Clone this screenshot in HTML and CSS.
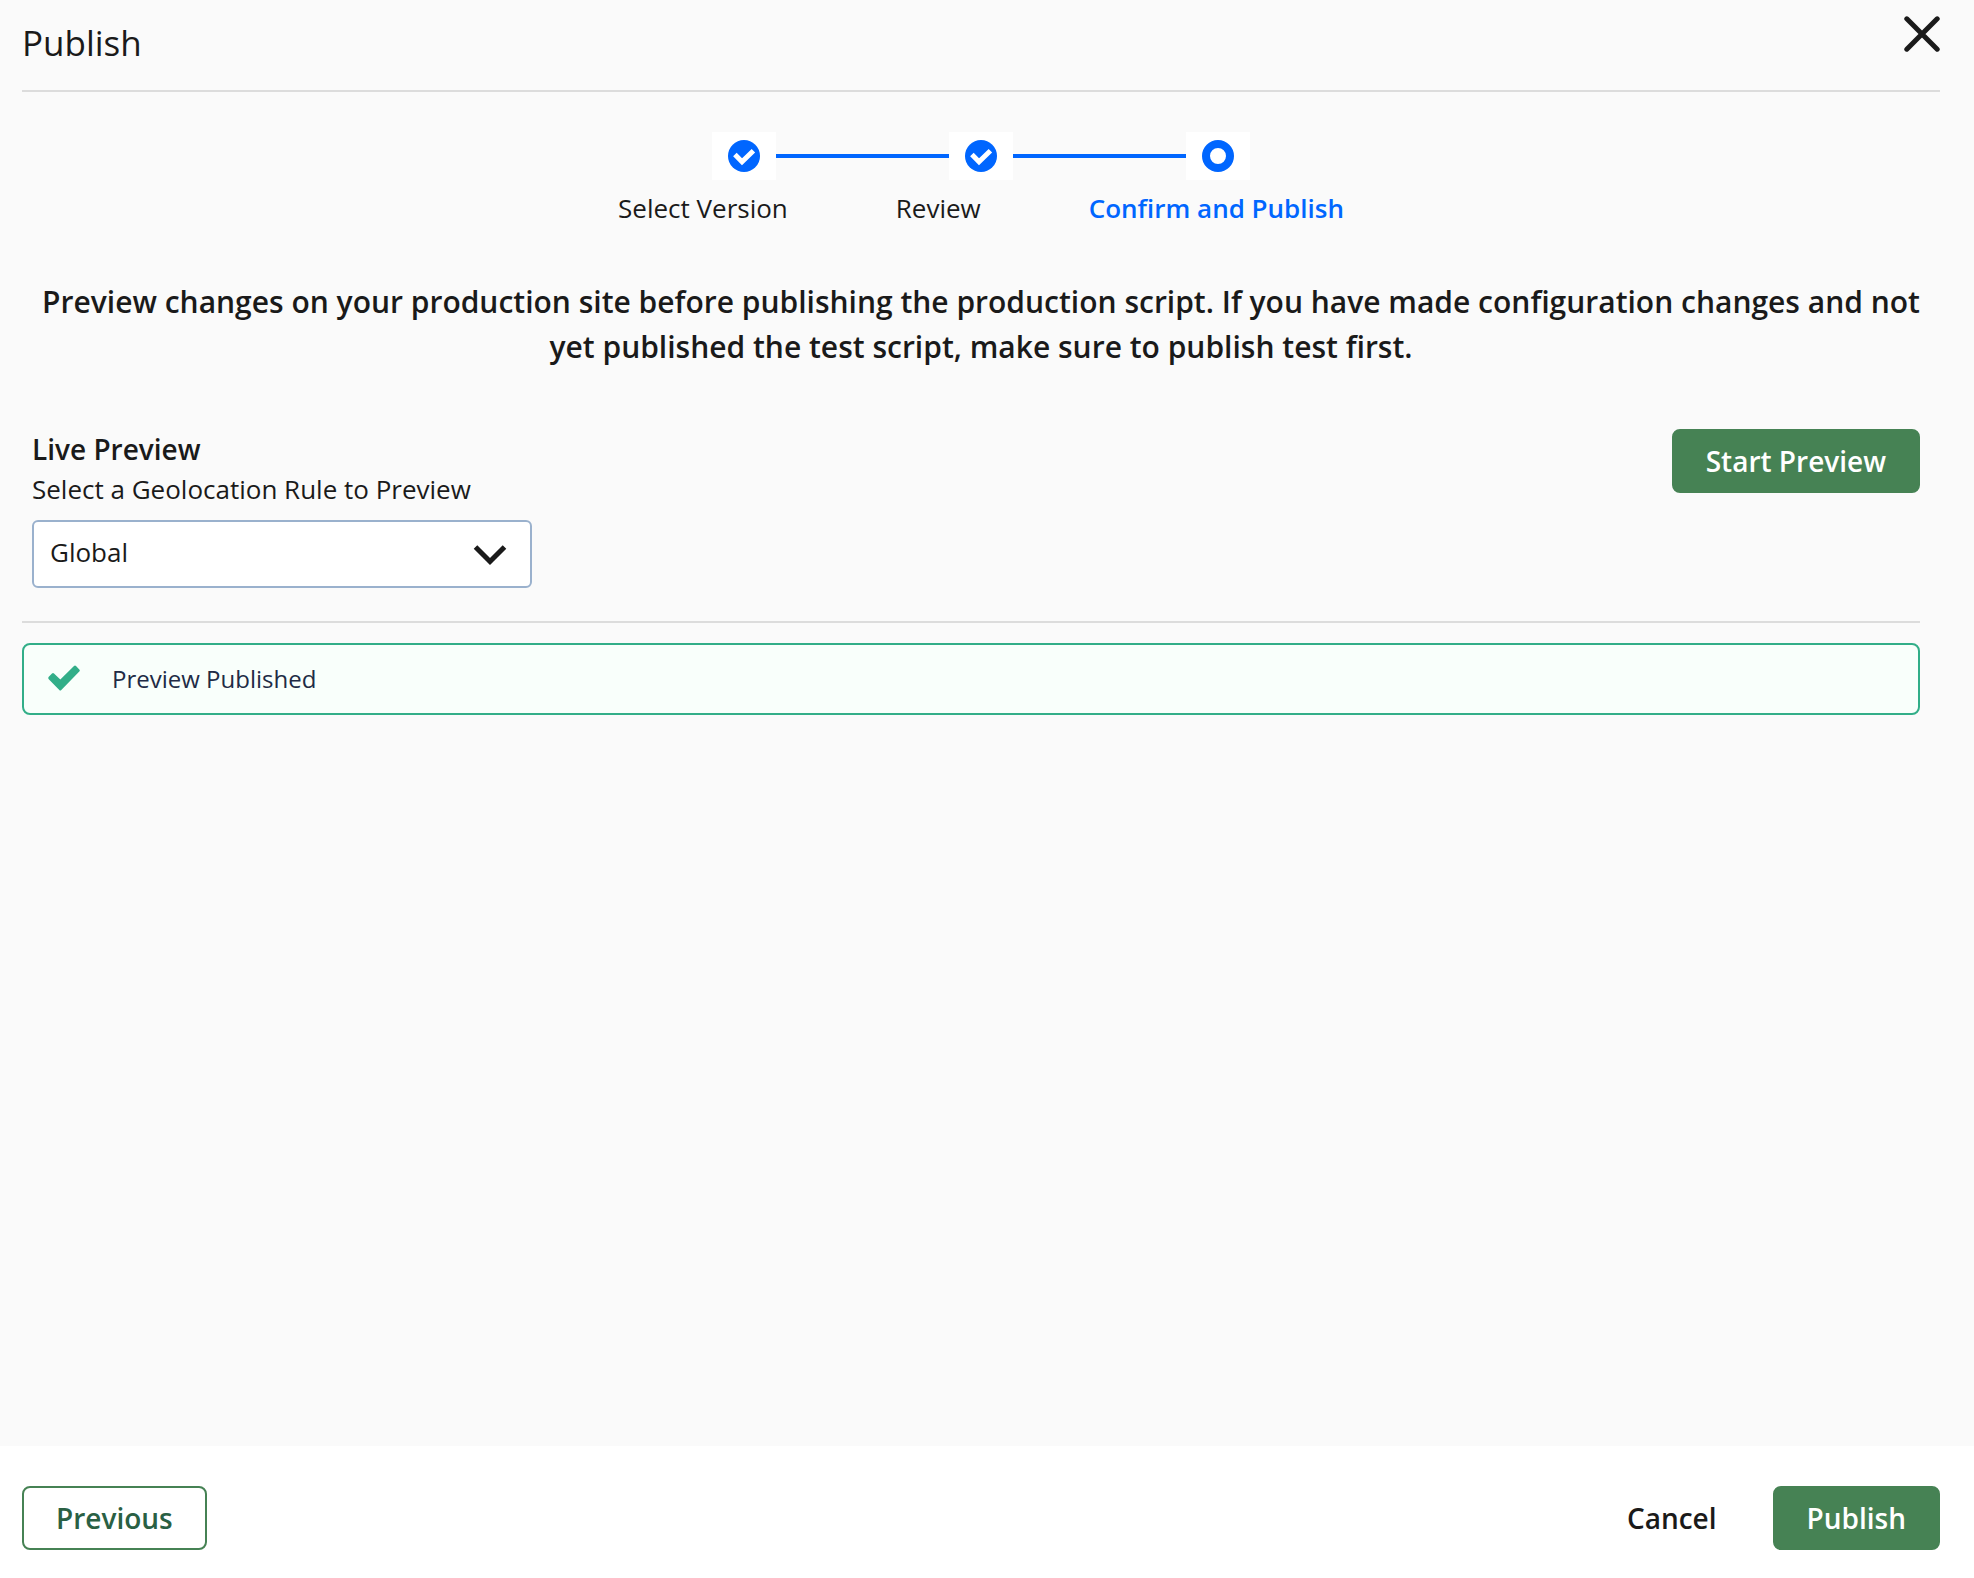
FILE: index.html
```html
<!DOCTYPE html>
<html lang="en">
<head>
  <meta charset="UTF-8" />
  <meta name="viewport" content="width=device-width, initial-scale=1" />
  <title>Publish</title>
  <link rel="stylesheet" href="styles.css">
</head>
<body>
  <main class="modal-body">
    <header class="modal-header">
      <h1>Publish</h1>
      <button type="button" class="close" aria-label="Close">
        <svg width="36" height="36" viewBox="0 0 36 36" fill="none" stroke="currentColor" stroke-width="5" stroke-linecap="round">
          <path d="M2.8 2.8L33.2 33.2M33.2 2.8L2.8 33.2" />
        </svg>
      </button>
    </header>

    <div class="content">
      <section class="stepper">
        <div class="step-icons">
          <span class="step-icon">
            <svg width="32" height="32" viewBox="0 0 32 32">
              <circle cx="16" cy="16" r="16" fill="#0066ff" />
              <path d="M6.9 14.6L14 21.7L25.4 10.7" fill="none" stroke="#fff" stroke-width="5" />
            </svg>
          </span>
          <span class="step-line"></span>
          <span class="step-icon">
            <svg width="32" height="32" viewBox="0 0 32 32">
              <circle cx="16" cy="16" r="16" fill="#0066ff" />
              <path d="M6.9 14.6L14 21.7L25.4 10.7" fill="none" stroke="#fff" stroke-width="5" />
            </svg>
          </span>
          <span class="step-line"></span>
          <span class="step-icon">
            <svg width="32" height="32" viewBox="0 0 32 32">
              <circle cx="16" cy="16" r="12" fill="#fff" stroke="#0066ff" stroke-width="8" />
            </svg>
          </span>
        </div>
        <ol class="step-labels">
          <li>Select Version</li>
          <li>Review</li>
          <li class="active">Confirm and Publish</li>
        </ol>
      </section>

      <p class="intro">Preview changes on your production site before publishing the production script. If you have made configuration changes and not yet published the test script, make sure to publish test first.</p>

      <section class="preview">
        <div class="preview-form">
          <h2>Live Preview</h2>
          <label for="rule">Select a Geolocation Rule to Preview</label>
          <div class="select-wrap">
            <select id="rule">
              <option>Global</option>
            </select>
            <svg class="chevron" width="34" height="22" viewBox="0 0 34 22" fill="none" stroke="currentColor" stroke-width="5">
              <path d="M2.5 3L17 17.5L31.5 3" />
            </svg>
          </div>
        </div>
        <button type="button" class="btn btn-primary">Start Preview</button>
      </section>

      <div class="alert" role="status">
        <svg width="32" height="26" viewBox="0 0 32 26" fill="#32ae88">
          <path d="M1 11.5L4 8.5Q5 7.5 6 8.5L12.3 14.5L26 1Q27 0 28 1L31.3 4.5Q32.3 5.5 31.3 6.5L13.3 25Q12.3 26 11.3 25L1 14.5Q-0.5 13 1 11.5Z" />
        </svg>
        <span>Preview Published</span>
      </div>
    </div>
  </main>

  <footer class="modal-footer">
    <button type="button" class="btn btn-outline">Previous</button>
    <div class="actions">
      <button type="button" class="btn btn-text">Cancel</button>
      <button type="button" class="btn btn-primary">Publish</button>
    </div>
  </footer>
</body>
</html>
```

FILE: styles.css
```css
* {
  box-sizing: border-box;
}
body {
  margin: 0;
  min-height: 100vh;
  display: flex;
  flex-direction: column;
  font-family: "Open Sans", "Noto Sans", sans-serif;
  font-size: 26px;
  color: #1a1a1a;
  background-color: #fff;
}
h1, h2, p, ol {
  margin: 0;
  padding: 0;
}
button, select {
  font: inherit;
  color: inherit;
}

.modal-body {
  flex: 1;
  padding: 0 34px 0 22px;
  background-color: #fafafa;
}
.modal-header {
  display: flex;
  justify-content: space-between;
  align-items: flex-start;
  height: 92px;
  border-bottom: 2px solid #dcdcdc;
}
h1 {
  padding-top: 19px;
  font-size: 35px;
  line-height: 48px;
  font-weight: 400;
}
.close {
  display: flex;
  margin-top: 16px;
  padding: 0;
  border: none;
  background: none;
  cursor: pointer;
}

/* stepper */
.stepper {
  padding-top: 40px;
}
.step-icons {
  display: flex;
  justify-content: center;
  align-items: center;
}
.step-icon {
  display: flex;
  justify-content: center;
  align-items: center;
  width: 64px;
  height: 48px;
  background-color: #fff;
}
.step-line {
  width: 173px;
  height: 4px;
  background-color: #0066ff;
}
.step-labels {
  display: flex;
  justify-content: center;
  gap: 108px;
  margin-top: 10px;
  line-height: 36px;
  list-style: none;
}
.step-labels .active {
  color: #0066ff;
  font-weight: 600;
}

.intro {
  margin-top: 53px;
  padding: 0 16px;
  font-size: 30px;
  line-height: 45px;
  font-weight: 600;
  text-align: center;
}

/* live preview */
.preview {
  display: flex;
  justify-content: space-between;
  align-items: flex-start;
  margin: 60px 20px 0 0;
  padding: 0 0 33px 10px;
  border-bottom: 2px solid #dcdcdc;
}
.preview-form {
  width: 500px;
}
h2 {
  font-size: 28px;
  line-height: 40px;
  font-weight: 600;
}
label {
  display: block;
  line-height: 40px;
}
.select-wrap {
  position: relative;
  margin-top: 11px;
}
select {
  display: block;
  width: 100%;
  height: 68px;
  padding: 0 60px 4px 16px;
  border: 2px solid #9ab1cd;
  border-radius: 6px;
  background-color: #fff;
  appearance: none;
}
.chevron {
  position: absolute;
  top: 24px;
  right: 25px;
  pointer-events: none;
}

.alert {
  display: flex;
  align-items: center;
  gap: 32px;
  height: 72px;
  margin: 20px 20px 0 0;
  padding: 0 24px 2px;
  border: 2px solid #32ae88;
  border-radius: 8px;
  background-color: #f9fffb;
  color: #212b45;
  font-size: 24px;
}

/* buttons */
.btn {
  height: 64px;
  padding: 0 32px;
  border: 2px solid transparent;
  border-radius: 8px;
  background: none;
  font-size: 28px;
  font-weight: 600;
  cursor: pointer;
}
.btn-primary {
  border-color: #468254;
  background-color: #468254;
  color: #fff;
}
.btn-outline {
  border-color: #468254;
  color: #2a6044;
}

.modal-footer {
  display: flex;
  justify-content: space-between;
  padding: 40px 34px 28px 22px;
}
.actions {
  display: flex;
  gap: 22px;
}
```
